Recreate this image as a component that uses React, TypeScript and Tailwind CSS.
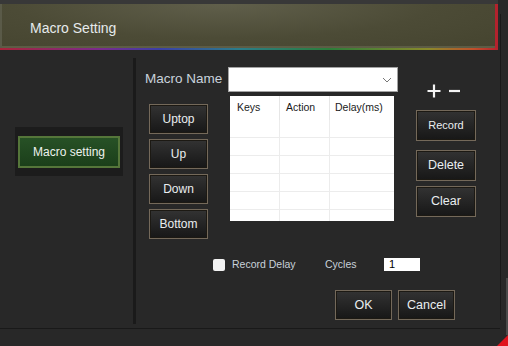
import React from 'react';

const font = "font-['Liberation_Sans',Arial,sans-serif]";

interface BtnProps {
  children: React.ReactNode;
  className?: string;
}

const DarkButton: React.FC<BtnProps> = ({ children, className = '' }) => (
  <div
    className={`flex items-center justify-center border border-[#74695a] bg-linear-to-b from-[#333333] to-[#171717] text-[#eaeef0] shadow-[inset_0_0_0_1px_#1c1913] ${className}`}
  >
    {children}
  </div>
);

const rows = [0, 1, 2, 3, 4];

const App: React.FC = () => {
  return (
    <div className={`relative w-[508px] h-[346px] overflow-hidden bg-[#282828] ${font}`}>
      {/* title bar */}
      <div className="h-[50px] flex flex-col">
        <div className="h-[4px] w-[498px] bg-[#383838]" />
        <div className="h-[44px] w-[498px] flex items-center pl-[30px] pt-[4px] border-l-[2px] border-l-[#5a5a48] border-r-[3px] border-r-[#b3222d] bg-[radial-gradient(ellipse_at_45%_0%,#605f4b,#4c4b36_55%,#45442f)] shadow-[inset_0_-2px_0_#5d5c45]">
          <span className="text-[14px] text-[#e6eaec] -ml-[2px]">Macro Setting</span>
        </div>
        <div className="h-[2px] w-[498px] bg-[linear-gradient(to_right,#a6243a,#7b2a8c_20%,#3b3fa6_32%,#2a7d8a_48%,#2b7d3a_66%,#8a8a2a_86%,#c0502a_95%,#b3222d)]" />
      </div>

      {/* body */}
      <div className="flex h-[278px]">
        {/* left tab list */}
        <div className="w-[133px] pt-[77px] pl-[15px]">
          <div className="w-[108px] h-[49px] bg-[#1c1c1c] pt-[9px] pl-[3px]">
            <div className="w-[102px] h-[32px] flex items-center justify-center border-2 border-[#55763a] bg-linear-to-b from-[#275126] to-[#1b3f1a] text-[12px] text-[#eef2ee]">
              Macro setting
            </div>
          </div>
        </div>

        <div className="w-[3px] mt-[8px] h-[266px] bg-[#1a1a1a]" />

        {/* main area */}
        <div className="flex-1 flex flex-col pl-[9px] pt-[17px]">
          <div className="flex items-start">
            {/* name label + move buttons */}
            <div className="w-[83px] flex flex-col">
              <div className="h-[25px] flex items-center text-[13.5px] text-[#c9d3dc]">Macro Name</div>
              <div className="ml-[4px] mt-[12px] flex flex-col gap-[5px] text-[12px]">
                <DarkButton className="w-[59px] h-[30px]">Uptop</DarkButton>
                <DarkButton className="w-[59px] h-[30px]">Up</DarkButton>
                <DarkButton className="w-[59px] h-[30px]">Down</DarkButton>
                <DarkButton className="w-[59px] h-[30px]">Bottom</DarkButton>
              </div>
            </div>

            {/* combobox + table */}
            <div className="w-[170px] flex flex-col">
              <div className="h-[25px] border border-[#a3a3a3] bg-white flex items-center justify-end pr-[5px]">
                <svg width="10" height="6" viewBox="0 0 10 6">
                  <path d="M1 1 L5 5 L9 1" fill="none" stroke="#777" strokeWidth="1" />
                </svg>
              </div>
              <div className="mt-[4px] ml-[2px] w-[164px] h-[125px] bg-white flex flex-col text-[10.5px] text-[#1a1a1a]">
                <div className="h-[24px] flex">
                  <div className="w-[50px] pl-[7px] flex items-center border-r border-[#e6e6e6]">Keys</div>
                  <div className="w-[50px] pl-[6px] flex items-center border-r border-[#e6e6e6]">Action</div>
                  <div className="w-[64px] pl-[5px] flex items-center">Delay(ms)</div>
                </div>
                {rows.map((r) => (
                  <div key={r} className="h-[18px] flex border-b border-[#ececec]">
                    <div className="w-[50px] border-r border-[#ececec]" />
                    <div className="w-[50px] border-r border-[#ececec]" />
                    <div className="w-[64px]" />
                  </div>
                ))}
                <div className="flex-1 flex">
                  <div className="w-[50px] border-r border-[#ececec]" />
                  <div className="w-[50px] border-r border-[#ececec]" />
                  <div className="w-[64px]" />
                </div>
              </div>
            </div>

            {/* add/remove + record buttons */}
            <div className="ml-[18px] w-[60px] flex flex-col">
              <div className="h-[14px] mt-[17px] flex items-center">
                <svg className="ml-[11px]" width="14" height="14" viewBox="0 0 14 14">
                  <path d="M7 0.5 V13.5 M0.5 7 H13.5" stroke="#f4f4f4" strokeWidth="2.2" />
                </svg>
                <svg className="ml-[8px]" width="11" height="14" viewBox="0 0 11 14">
                  <path d="M0 7 H11" stroke="#f4f4f4" strokeWidth="2.2" />
                </svg>
              </div>
              <DarkButton className="mt-[12px] w-[60px] h-[31px] text-[11px]">Record</DarkButton>
              <DarkButton className="mt-[9px] w-[60px] h-[31px] text-[12.5px]">Delete</DarkButton>
              <DarkButton className="mt-[5px] w-[60px] h-[31px] text-[12.5px]">Clear</DarkButton>
            </div>
          </div>

          {/* record delay / cycles */}
          <div className="mt-[18px] h-[15px] flex items-center text-[10.5px] text-[#c8d2da]">
            <div className="ml-[68px] w-[12px] h-[12px] rounded-[2px] bg-[#f2f2f2]" />
            <span className="ml-[7px] w-[93px]">Record Delay</span>
            <span className="w-[59px]">Cycles</span>
            <div className="w-[36px] h-[13px] bg-white text-[11px] leading-[13px] text-black pl-[5px]">1</div>
          </div>

          {/* ok / cancel */}
          <div className="mt-[18px] ml-[190px] flex gap-[6px] text-[12.5px]">
            <DarkButton className="w-[57px] h-[30px]">OK</DarkButton>
            <DarkButton className="w-[57px] h-[30px]">Cancel</DarkButton>
          </div>
        </div>
      </div>

      {/* bottom edge */}
      <div className="h-[1px] w-[500px] bg-[#191919]" />
      <div className="h-[17px]" />

      {/* frame decorations */}
      <div className="absolute left-[500px] top-[14px] w-[1px] h-[306px] bg-[#191919]" />
      <div className="absolute left-[506px] top-[278px] w-[2px] h-[57px] bg-[#4a4a4a]" />
      <svg className="absolute right-0 bottom-0" width="11" height="11" viewBox="0 0 11 11">
        <path d="M11 0 L11 11 L0 11 Z" fill="#e0141e" />
      </svg>
    </div>
  );
};

export default App;
